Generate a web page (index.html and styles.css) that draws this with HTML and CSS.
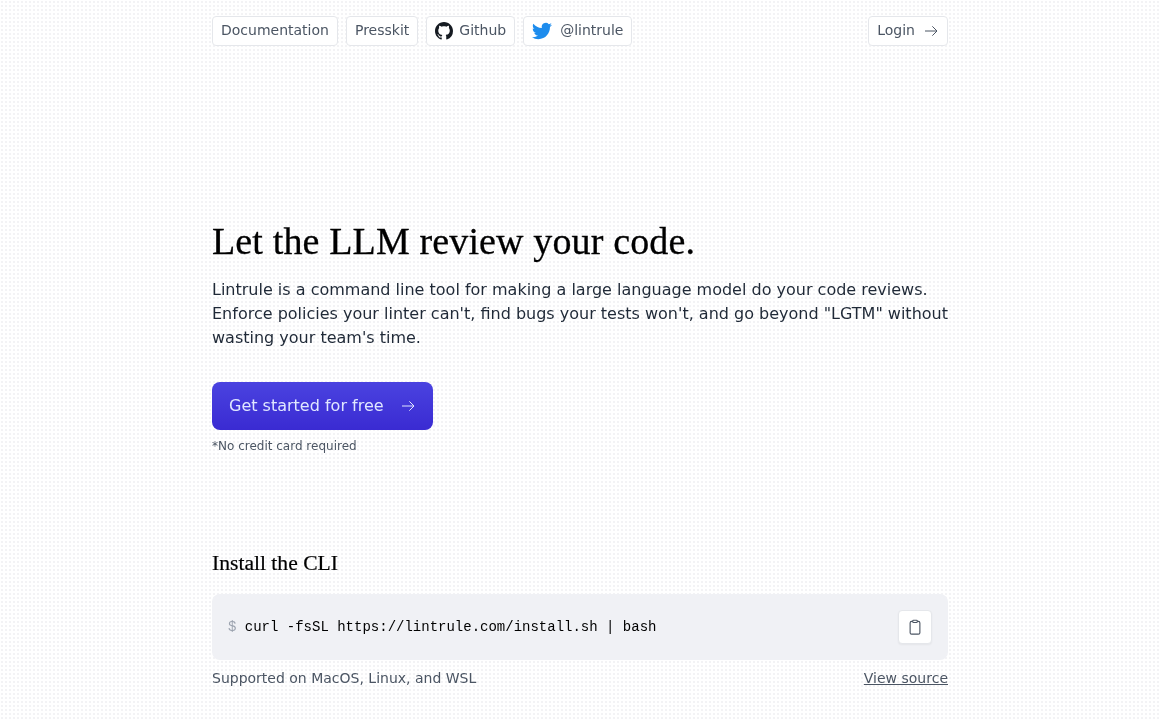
FILE: index.html
```html
<!DOCTYPE html>
<html lang="en">
<head>
  <meta charset="UTF-8" />
  <title>Lintrule</title>
  <link rel="stylesheet" href="styles.css">
</head>
<body>
  <div class="page">

    <!-- Top nav -->
    <nav class="nav">
      <div class="nav-links">
        <a class="pill" href="#">Documentation</a>
        <a class="pill" href="#">Presskit</a>
        <a class="pill pill-github" href="#">
          <svg class="icon" viewBox="0 0 16 16" width="18" height="18" fill="#161b22"><path d="M8 0C3.58 0 0 3.58 0 8c0 3.54 2.29 6.53 5.47 7.59.4.07.55-.17.55-.38 0-.19-.01-.82-.01-1.49-2.01.37-2.53-.49-2.69-.94-.09-.23-.48-.94-.82-1.13-.28-.15-.68-.52-.01-.53.63-.01 1.08.58 1.23.82.72 1.21 1.87.87 2.33.66.07-.52.28-.87.51-1.07-1.78-.2-3.64-.89-3.64-3.95 0-.87.31-1.59.82-2.15-.08-.2-.36-1.02.08-2.12 0 0 .67-.21 2.2.82.64-.18 1.32-.27 2-.27s1.36.09 2 .27c1.53-1.04 2.2-.82 2.2-.82.44 1.1.16 1.92.08 2.12.51.56.82 1.27.82 2.15 0 3.07-1.87 3.75-3.65 3.95.29.25.54.73.54 1.48 0 1.07-.01 1.93-.01 2.2 0 .21.15.46.55.38A8.01 8.01 0 0 0 16 8c0-4.42-3.58-8-8-8z"/></svg>
          Github
        </a>
        <a class="pill" href="#">
          <svg class="icon" viewBox="0 0 24 24" width="20" height="20" fill="#1d8ced"><path d="M23.95 4.57a10 10 0 0 1-2.82.77 4.96 4.96 0 0 0 2.16-2.72c-.95.55-2 .95-3.12 1.18a4.92 4.92 0 0 0-8.38 4.48C7.69 8.1 4.07 6.13 1.64 3.16a4.82 4.82 0 0 0-.67 2.48c0 1.71.87 3.21 2.19 4.1a4.9 4.9 0 0 1-2.23-.62v.06a4.92 4.92 0 0 0 3.95 4.83 5 5 0 0 1-2.21.08 4.94 4.94 0 0 0 4.6 3.42A9.87 9.87 0 0 1 0 19.54a14 14 0 0 0 7.56 2.21c9.05 0 14-7.5 14-13.98 0-.21 0-.42-.02-.63a9.94 9.94 0 0 0 2.46-2.55z"/></svg>
          @lintrule
        </a>
      </div>
      <a class="pill" href="#">
        Login
        <svg class="arrow" viewBox="0 0 24 24" width="16" height="16"><path d="M3 12h18M14 5l7 7-7 7"/></svg>
      </a>
    </nav>

    <!-- Hero -->
    <section class="hero">
      <h1>Let the LLM review your code.</h1>
      <p class="lead">Lintrule is a command line tool for making a large language model do your code reviews. Enforce policies your linter can't, find bugs your tests won't, and go beyond "LGTM" without wasting your team's time.</p>
      <a class="cta" href="#">
        Get started for free
        <svg class="arrow" viewBox="0 0 24 24" width="16" height="16"><path d="M3 12h18M14 5l7 7-7 7"/></svg>
      </a>
      <p class="note">*No credit card required</p>
    </section>

    <!-- Install -->
    <section class="install">
      <h2>Install the CLI</h2>
      <div class="code-box">
        <code><span class="prompt">$</span> curl -fsSL https://lintrule.com/install.sh | bash</code>
        <button class="copy" type="button" aria-label="Copy">
          <svg viewBox="0 0 24 24" width="18" height="18"><path d="M9 4.5H7.5a2 2 0 0 0-2 2v13a2 2 0 0 0 2 2h9a2 2 0 0 0 2-2v-13a2 2 0 0 0-2-2H15"/><rect x="9" y="3" width="6" height="3" rx="1"/></svg>
        </button>
      </div>
      <div class="install-foot">
        <span>Supported on MacOS, Linux, and WSL</span>
        <a href="#">View source</a>
      </div>
    </section>

  </div>
</body>
</html>
```

FILE: styles.css
```css
* {
  box-sizing: border-box;
}

body {
  margin: 0;
  font-family: "DejaVu Sans", sans-serif;
  color: #1f2937;
  background-color: #fff;
  background-image: radial-gradient(#f3f3f5 1px, transparent 1px);
  background-size: 4px 4px;
}

a {
  color: inherit;
  text-decoration: none;
}

.page {
  width: 736px;
  margin: 0 auto;
  padding-top: 16px;
  will-change: transform;
}

.nav {
  display: flex;
  justify-content: space-between;
}

.nav-links {
  display: flex;
  gap: 8px;
}

.pill {
  display: flex;
  align-items: center;
  gap: 8px;
  height: 30px;
  padding: 0 8px 2px;
  background: #fff;
  border: 1px solid #e5e7eb;
  border-radius: 4px;
  font-size: 14px;
  color: #4b5563;
}

.pill-github {
  gap: 6px;
}

.icon {
  margin-top: 2px;
}

.arrow {
  fill: none;
  stroke: currentColor;
  stroke-width: 1.5;
  margin-top: 2px;
}

.hero {
  margin-top: 173px;
}

h1 {
  margin: 0;
  font-family: "Liberation Serif", serif;
  font-size: 38px;
  line-height: 44px;
  font-weight: 400;
  letter-spacing: 0.14px;
  -webkit-text-stroke: 0.3px #000;
  color: #000;
}

.lead {
  margin: 15px 0 0;
  font-size: 16px;
  line-height: 24px;
}

.cta {
  display: inline-flex;
  align-items: center;
  gap: 16px;
  height: 48px;
  margin-top: 32px;
  padding: 0 17px 2px;
  color: #e0e7ff;
  font-size: 16px;
  border-radius: 8px;
  background: linear-gradient(#4a43e0, #3a2bd2);
}

.note {
  margin: 8px 0 0;
  font-size: 12px;
  line-height: 16px;
  color: #4b5563;
}

.install {
  margin-top: 95px;
}

h2 {
  margin: 0;
  font-family: "Liberation Serif", serif;
  font-size: 21.6px;
  line-height: 28px;
  font-weight: 400;
  -webkit-text-stroke: 0.2px #000;
  color: #000;
}

.code-box {
  display: flex;
  justify-content: space-between;
  align-items: center;
  height: 66px;
  margin-top: 17px;
  padding: 0 16px;
  background: #f0f1f5;
  border-radius: 8px;
}

code {
  font-family: "Liberation Mono", monospace;
  font-size: 14px;
  color: #000;
}

.prompt {
  color: #9ca3af;
}

.copy {
  display: flex;
  align-items: center;
  justify-content: center;
  width: 34px;
  height: 34px;
  padding: 0;
  background: #fff;
  border: 1px solid #e5e7eb;
  border-radius: 4px;
  box-shadow: 0 1px 2px rgba(0, 0, 0, 0.05);
}

.copy svg {
  fill: none;
  stroke: #4b5563;
  stroke-width: 1.5;
}

.install-foot {
  display: flex;
  justify-content: space-between;
  margin-top: 8px;
  font-size: 14px;
  line-height: 20px;
  color: #4b5563;
}

.install-foot a {
  text-decoration: underline;
}
```
